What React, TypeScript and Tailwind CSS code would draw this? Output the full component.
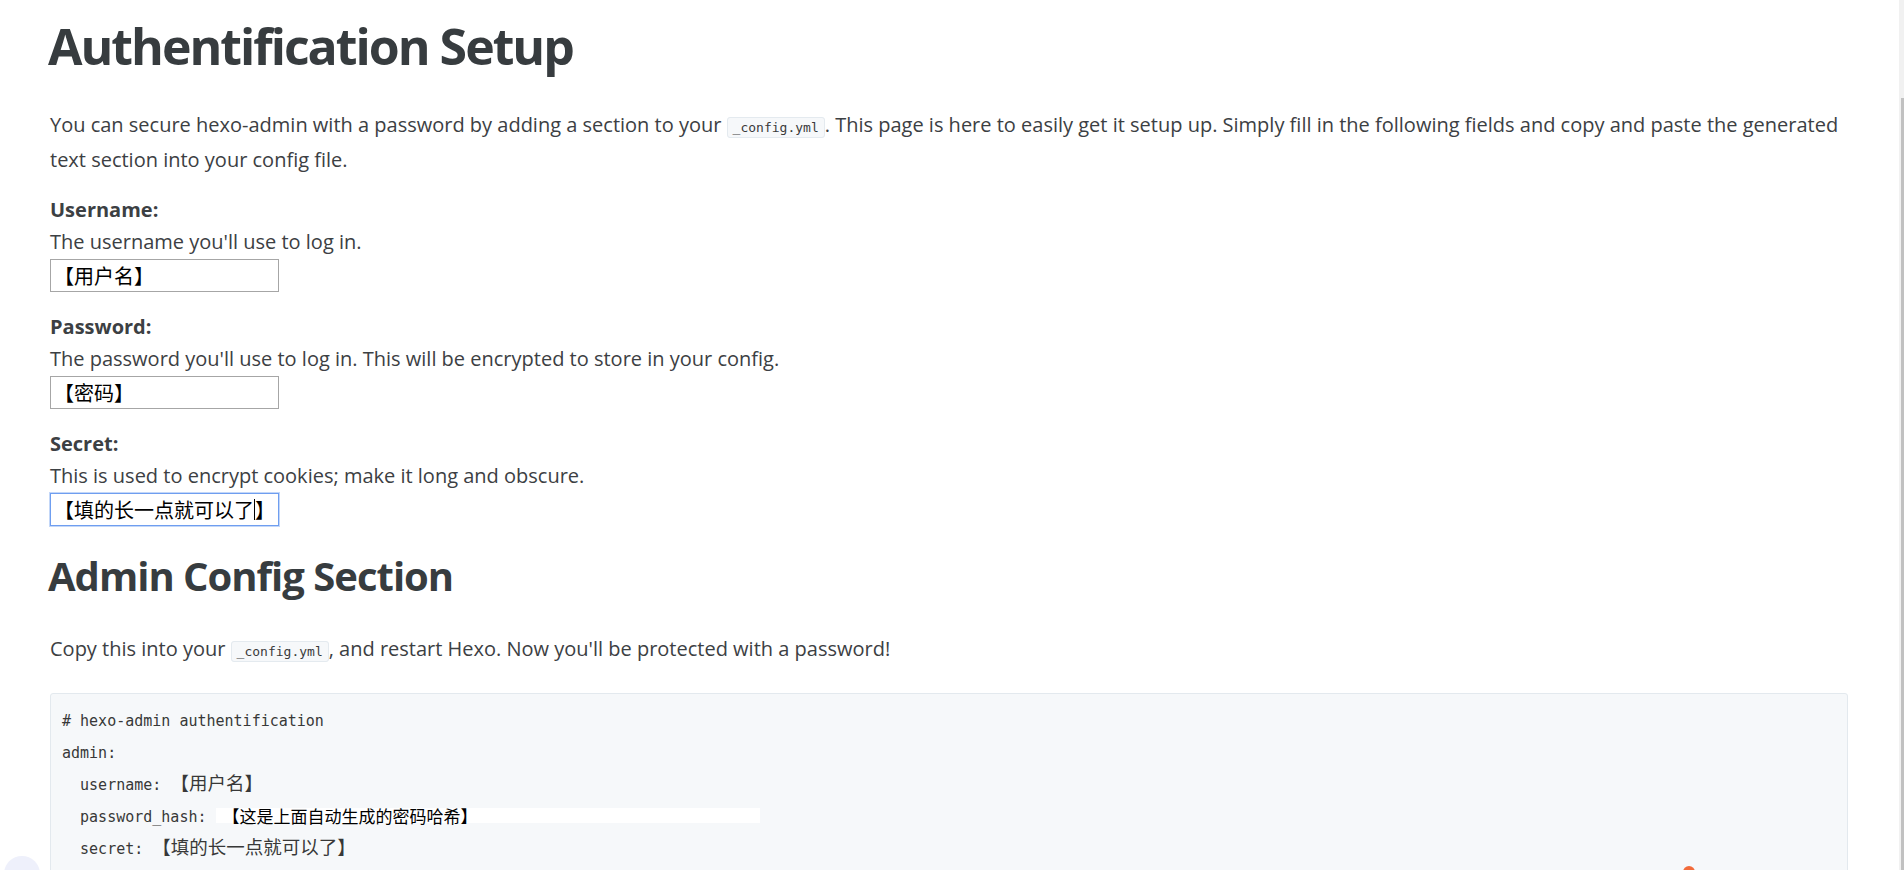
const fields = [
  { label: 'Username:', help: "The username you'll use to log in.", value: '【用户名】', focused: false },
  {
    label: 'Password:',
    help: "The password you'll use to log in. This will be encrypted to store in your config.",
    value: '【密码】',
    focused: false,
  },
  {
    label: 'Secret:',
    help: 'This is used to encrypt cookies; make it long and obscure.',
    value: '【填的长一点就可以了】',
    focused: true,
  },
];

function InlineCode({ children }: { children: string }) {
  return (
    <code className="rounded-[3px] border border-[#e4eaef] bg-[#f6f8fa] px-[5px] py-[2px] font-['DejaVu_Sans_Mono',monospace] text-[13px] text-[#3a3a3a]">
      {children}
    </code>
  );
}

function Cjk({ children }: { children: string }) {
  return <span className="font-['Noto_Sans_CJK_SC',sans-serif] text-[18.5px] leading-none">{children}</span>;
}

function Field({ label, help, value, focused }: (typeof fields)[number]) {
  return (
    <div className="mt-[19px] first:mt-[18px]">
      <div className="font-bold">{label}</div>
      <div>{help}</div>
      <div
        className={`mt-[1px] flex h-[33px] w-[229px] items-center overflow-hidden border pl-[3px] font-['Noto_Sans_CJK_SC',sans-serif] text-[20px] whitespace-nowrap text-black ${
          focused ? 'border-[#6f9ef0] shadow-[0_0_0_1px_#c3d7f8]' : 'border-[#a6a6a6]'
        }`}
      >
        {focused ? (
          <>
            <span>{value.slice(0, -1)}</span>
            <span className="h-[21px] w-px shrink-0 bg-black" />
            <span>{value.slice(-1)}</span>
          </>
        ) : (
          value
        )}
      </div>
    </div>
  );
}

export default function App() {
  return (
    <div className="relative flex min-h-screen bg-white font-['Open_Sans',sans-serif] text-[20px] leading-[32px] text-[#3c4043]">
      <main className="flex-1 pl-[50px] pr-[51px]">
        <h1 className="mt-[16px] -ml-[2px] text-[50px] font-bold leading-[60px] tracking-[-0.04em] text-[#373c3f]">
          Authentification Setup
        </h1>

        <p className="mt-[33px]">
          You can secure hexo-admin with a password by adding a section to your <InlineCode>_config.yml</InlineCode>.
          This page is here to easily get it setup up. Simply fill in the following fields and copy and paste the
          generated text section into your config file.
        </p>

        <div className="flex flex-col">
          {fields.map((f) => (
            <Field key={f.label} {...f} />
          ))}
        </div>

        <h2 className="mt-[26px] -ml-[2px] text-[40px] font-bold leading-[48px] tracking-[-0.025em] text-[#373c3f]">
          Admin Config Section
        </h2>

        <p className="mt-[33px]">
          Copy this into your <InlineCode>_config.yml</InlineCode>, and restart Hexo. Now you'll be protected with a
          password!
        </p>

        <pre className="mt-[25px] rounded-[3px] border border-[#e3e9ee] bg-[#f6f8fa] px-[11px] pt-[11px] pb-[20px] font-['DejaVu_Sans_Mono','Noto_Sans_CJK_SC',monospace] text-[15px] leading-[32px] text-[#383838]">
          <div># hexo-admin authentification</div>
          <div>admin:</div>
          <div>
            {'  username: '}
            <Cjk>【用户名】</Cjk>
          </div>
          <div>
            {'  password_hash: '}
            <span className="inline-block h-[15px] w-[544px] bg-white pl-[7px] align-[-1px] font-['Noto_Sans_CJK_SC',sans-serif] text-[17px] leading-[15px] text-black">
              【这是上面自动生成的密码哈希】
            </span>
          </div>
          <div>
            {'  secret: '}
            <Cjk>【填的长一点就可以了】</Cjk>
          </div>
          <div>&nbsp;</div>
        </pre>
      </main>

      {/* scrollbar */}
      <div className="flex w-[5px] flex-col bg-[#f1f1f1]">
        <div className="h-[98px]" />
        <div className="ml-[2px] flex-1 bg-[#c1c1c1]" />
      </div>

      {/* floating widgets peeking in at the bottom edge */}
      <div className="absolute top-[856px] left-[4px] h-[36px] w-[36px] rounded-full bg-[#eef0fb]" />
      <div className="absolute top-[866px] left-[1683px] h-[10px] w-[12px] rounded-t-full bg-[#f26b3a]" />
    </div>
  );
}
